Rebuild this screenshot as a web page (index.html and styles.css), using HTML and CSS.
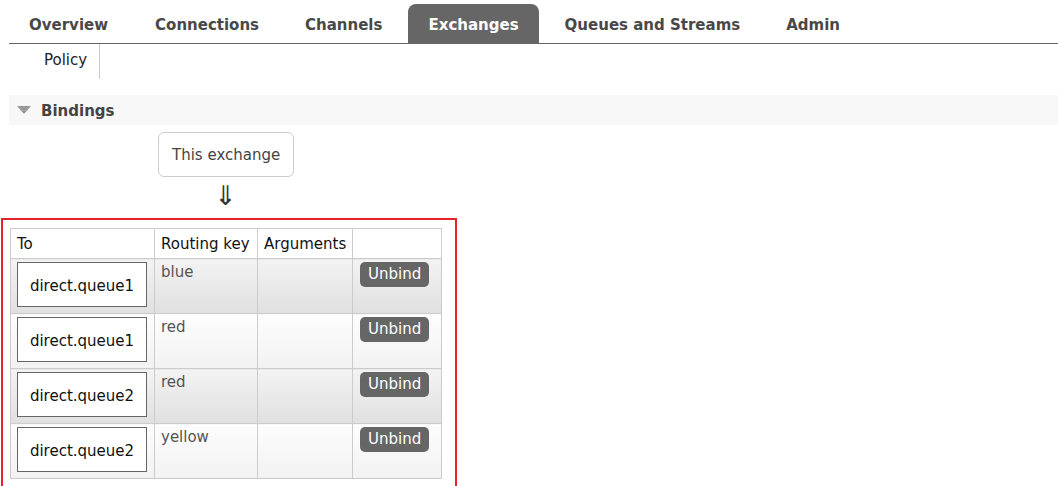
FILE: index.html
```html
<!DOCTYPE html>
<html>
<head>
<meta charset="utf-8">
<link rel="stylesheet" href="styles.css">
</head>
<body>
<div class="page">
  <ul class="tabs">
    <li class="tab">Overview</li>
    <li class="tab">Connections</li>
    <li class="tab">Channels</li>
    <li class="tab active">Exchanges</li>
    <li class="tab">Queues and Streams</li>
    <li class="tab">Admin</li>
  </ul>
  <ul class="subtabs">
    <li class="subtab">Policy</li>
  </ul>
  <div class="section-head">
    <span class="tri"></span>
    <span class="section-title">Bindings</span>
  </div>
  <div class="exchange-wrap">
    <div class="exchange-box">This exchange</div>
    <div class="arrow">⇓</div>
  </div>
  <div class="highlight">
    <table class="list">
      <thead>
        <tr>
          <th class="c1">To</th>
          <th class="c2">Routing key</th>
          <th class="c3">Arguments</th>
          <th class="c4"></th>
        </tr>
      </thead>
      <tbody>
        <tr class="odd">
          <td><div class="queue">direct.queue1</div></td>
          <td class="key">blue</td>
          <td></td>
          <td><span class="btn">Unbind</span></td>
        </tr>
        <tr class="even">
          <td><div class="queue">direct.queue1</div></td>
          <td class="key">red</td>
          <td></td>
          <td><span class="btn">Unbind</span></td>
        </tr>
        <tr class="odd">
          <td><div class="queue">direct.queue2</div></td>
          <td class="key">red</td>
          <td></td>
          <td><span class="btn">Unbind</span></td>
        </tr>
        <tr class="even">
          <td><div class="queue">direct.queue2</div></td>
          <td class="key">yellow</td>
          <td></td>
          <td><span class="btn">Unbind</span></td>
        </tr>
      </tbody>
    </table>
  </div>
</div>
</body>
</html>
```
FILE: styles.css
```css
html, body {
  margin: 0;
  padding: 0;
  background: #fff;
}
body {
  font-family: "DejaVu Sans", Verdana, sans-serif;
  font-size: 15px;
  color: #444;
}
.page {
  padding-left: 9px;
}
.tabs {
  list-style: none;
  margin: 0;
  padding: 4px 0 0 0;
  display: flex;
  border-bottom: 1px solid #666;
  height: 39px;
}
.tab {
  padding: 3px 20px 0 20px;
  margin-right: 6px;
  font-weight: bold;
  font-size: 15px;
  color: #484848;
  line-height: 36px;
  border-radius: 8px 8px 0 0;
}
.tab:first-child {
  margin-right: 7px;
}
.tab.active {
  background: #666;
  color: #fff;
}
.subtabs {
  list-style: none;
  margin: 0;
  padding: 0 0 0 23px;
  display: flex;
  height: 35px;
}
.subtab {
  padding: 0 12px;
  line-height: 32px;
  color: #222;
  border-right: 1px solid #ccc;
}
.section-head {
  margin-top: 16px;
  height: 30px;
  background: #f8f8f8;
  display: flex;
  align-items: center;
}
.tri {
  width: 0;
  height: 0;
  border-left: 7px solid transparent;
  border-right: 7px solid transparent;
  border-top: 8px solid #999;
  margin-left: 8px;
  margin-right: 10px;
}
.section-title {
  font-weight: bold;
  color: #444;
  padding-top: 1px;
}
.exchange-wrap {
  display: flex;
  flex-direction: column;
  align-items: flex-start;
  padding-left: 149px;
  padding-top: 7px;
}
.exchange-box {
  border: 1px solid #ccc;
  border-radius: 6px;
  padding: 0 13px;
  height: 43px;
  line-height: 45px;
  color: #444;
}
.arrow {
  width: 135px;
  text-align: center;
  font-size: 27px;
  line-height: 38px;
  color: #333;
}
.highlight {
  margin-left: -8px;
  margin-top: 3px;
  width: fit-content;
  border: 2px solid #e8212b;
  padding: 8px 13px 7px 7px;
}
.list {
  border-collapse: collapse;
  width: 432px;
  table-layout: fixed;
}
.list th, .list td {
  box-sizing: border-box;
  border: 1px solid #ccc;
  vertical-align: top;
}
.list th {
  font-weight: normal;
  text-align: left;
  color: #111;
  height: 29px;
  padding: 2px 6px 0 6px;
  line-height: 27px;
  background: #fff;
}
.c1 { width: 144px; }
.c2 { width: 103px; }
.c3 { width: 95px; }
.list td {
  height: 55px;
  padding: 3px 6px 0 6px;
}
.odd td {
  background: linear-gradient(#f3f3f3, #e0e0e0);
}
.even td {
  background: linear-gradient(#fdfdfd, #f2f2f2);
}
.queue {
  box-sizing: border-box;
  width: 130px;
  height: 45px;
  border: 1px solid #666;
  background: #fff;
  color: #111;
  text-align: center;
  line-height: 46px;
}
.key {
  color: #555;
  line-height: 20px;
}
.btn {
  display: block;
  width: fit-content;
  margin-top: 0;
  margin-left: 1px;
  background: #666;
  color: #fff;
  border-radius: 5px;
  padding: 0 8px;
  height: 25px;
  line-height: 25px;
}
```
